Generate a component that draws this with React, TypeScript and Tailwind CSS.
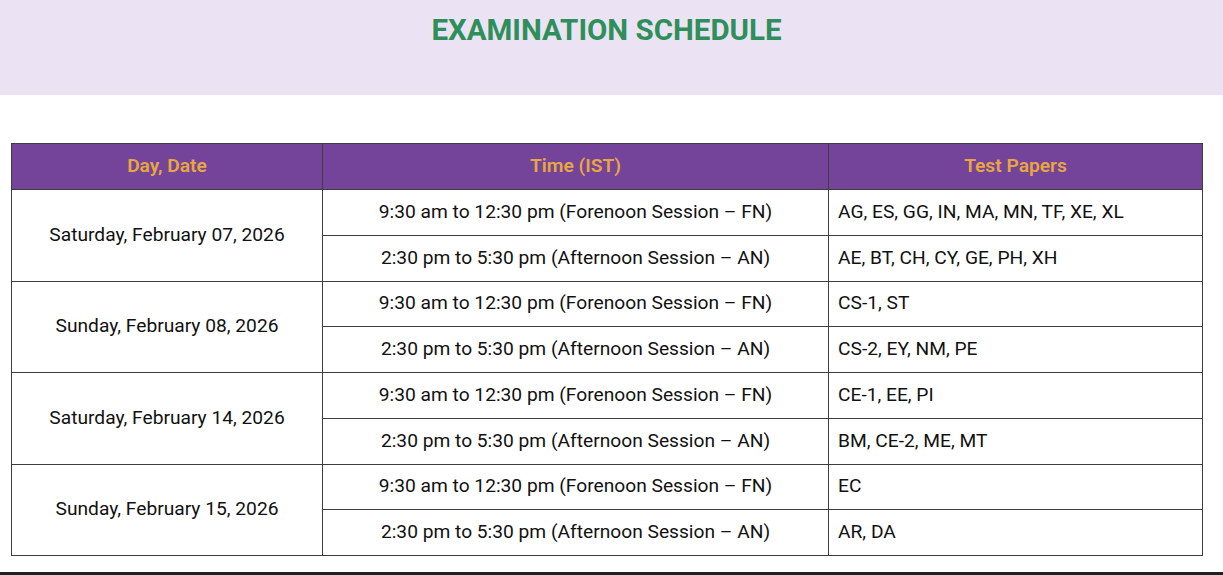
const ROWS = [
  {
    date: "Saturday, February 07, 2026",
    sessions: [
      { time: "9:30 am to 12:30 pm (Forenoon Session – FN)", papers: "AG, ES, GG, IN, MA, MN, TF, XE, XL" },
      { time: "2:30 pm to 5:30 pm (Afternoon Session – AN)", papers: "AE, BT, CH, CY, GE, PH, XH" },
    ],
  },
  {
    date: "Sunday, February 08, 2026",
    sessions: [
      { time: "9:30 am to 12:30 pm (Forenoon Session – FN)", papers: "CS-1, ST" },
      { time: "2:30 pm to 5:30 pm (Afternoon Session – AN)", papers: "CS-2, EY, NM, PE" },
    ],
  },
  {
    date: "Saturday, February 14, 2026",
    sessions: [
      { time: "9:30 am to 12:30 pm (Forenoon Session – FN)", papers: "CE-1, EE, PI" },
      { time: "2:30 pm to 5:30 pm (Afternoon Session – AN)", papers: "BM, CE-2, ME, MT" },
    ],
  },
  {
    date: "Sunday, February 15, 2026",
    sessions: [
      { time: "9:30 am to 12:30 pm (Forenoon Session – FN)", papers: "EC" },
      { time: "2:30 pm to 5:30 pm (Afternoon Session – AN)", papers: "AR, DA" },
    ],
  },
];

export default function App() {
  return (
    <div className="min-h-screen bg-white font-['Roboto',sans-serif] text-[#111]">
      {/* banner */}
      <div className="h-[95px] bg-[#ebe3f4] pt-[13px] pr-[10px] text-center">
        <h1 className="text-[29.5px] font-bold leading-[34px] text-[#2f8f5a]">EXAMINATION SCHEDULE</h1>
      </div>

      <div className="pl-[11px] pt-[48px] pb-[16px]">
        <table className="w-[1192px] table-fixed border-collapse text-[19.2px]">
          <colgroup>
            <col className="w-[311px]" />
            <col className="w-[506px]" />
            <col />
          </colgroup>
          <thead>
            <tr className="h-[46px] bg-[#74449a]">
              {["Day, Date", "Time (IST)", "Test Papers"].map((h) => (
                <th key={h} className="border border-[#3d3d3d] text-center font-semibold text-[#e8a640]">
                  {h}
                </th>
              ))}
            </tr>
          </thead>
          <tbody>
            {ROWS.map((r) =>
              r.sessions.map((s, i) => (
                <tr key={r.date + i} className="h-[45.75px]">
                  {i === 0 && (
                    <td rowSpan={2} className="border border-[#3d3d3d] text-center align-middle">
                      {r.date}
                    </td>
                  )}
                  <td className="border border-[#3d3d3d] text-center">{s.time}</td>
                  <td className="border border-[#3d3d3d] px-[9px]">{s.papers}</td>
                </tr>
              ))
            )}
          </tbody>
        </table>
      </div>

      <div className="h-[40px] bg-[#1b2424]" />
    </div>
  );
}
